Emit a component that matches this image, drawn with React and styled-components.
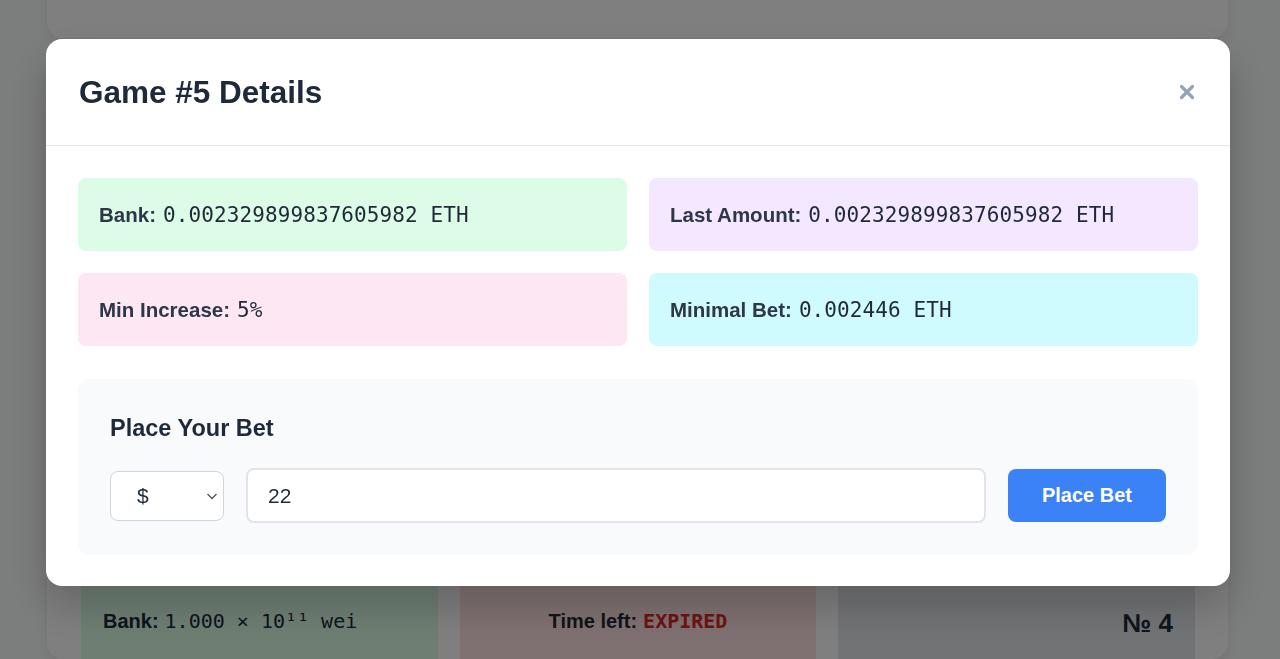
import React from "react";
import styled, { createGlobalStyle } from "styled-components";

const SANS = `"Liberation Sans", Arial, Helvetica, sans-serif`;
const MONO = `"DejaVu Sans Mono", "Liberation Mono", monospace`;

const GlobalStyle = createGlobalStyle`
  html, body {
    margin: 0;
    padding: 0;
    height: 100%;
    overflow: hidden;
  }
  body {
    background: #f9fafb;
    font-family: ${SANS};
    color: #1f2937;
  }
  * {
    box-sizing: border-box;
  }
`;

/* ---------- page behind the modal ---------- */

const Page = styled.div`
  display: flex;
  flex-direction: column;
  gap: 24px;
  width: 1181px;
  margin-left: 47px;
  /* the list is scrolled: only the bottom of the first card shows */
  margin-top: -262px;
`;

const GameCard = styled.div`
  background: white;
  border-radius: 16px;
  box-shadow: 0 4px 12px rgba(0, 0, 0, 0.08);
  padding: ${(p) => (p.$cut ? "33px 33px 0 34px" : "33px 33px 33px 34px")};
  min-height: ${(p) => p.$minHeight || "auto"};
`;

const GameHead = styled.div`
  height: 476px;
`;

const StatGrid = styled.div`
  display: grid;
  grid-template-columns: repeat(3, 1fr);
  gap: 22px;
`;

const Stat = styled.div`
  display: flex;
  align-items: flex-start;
  justify-content: ${(p) => p.$align || "flex-start"};
  height: 88px;
  padding: 38px 22px 0;
  border-radius: 8px 8px 0 0;
  background: ${(p) => p.$bg};
  font-size: 20px;
  line-height: 24px;
  color: #1f2937;

  b {
    font-weight: 700;
    margin-right: 6px;
  }
`;

const StatValue = styled.span`
  font-family: ${MONO};
  font-size: 20px;
  color: ${(p) => p.$color || "inherit"};
  font-weight: ${(p) => (p.$bold ? 700 : 400)};
`;

const GameNo = styled.span`
  font-size: 26px;
  font-weight: 700;
  padding-top: 2px;
`;

/* ---------- modal ---------- */

const Overlay = styled.div`
  position: fixed;
  inset: 0;
  background: rgba(0, 0, 0, 0.5);
  display: flex;
  align-items: flex-start;
  padding: 39px 0 0 46px;
`;

const Modal = styled.div`
  width: 1184px;
  background: white;
  border-radius: 16px;
  box-shadow: 0 20px 40px rgba(0, 0, 0, 0.2);
  overflow: hidden;
`;

const ModalHeader = styled.div`
  display: flex;
  align-items: center;
  justify-content: space-between;
  padding: 34px 33px 34px 33px;
  border-bottom: 1px solid #e5e7eb;
`;

const Title = styled.h2`
  margin: 0;
  font-size: 31.5px;
  line-height: 38px;
  font-weight: 700;
  color: #1e293b;
`;

const CloseButton = styled.button`
  border: none;
  background: none;
  padding: 0;
  width: 20px;
  height: 20px;
  display: flex;
  align-items: center;
  justify-content: center;
  cursor: pointer;
  color: #94a3b8;
`;

const ModalBody = styled.div`
  padding: 32px 32px 31px 32px;
  display: flex;
  flex-direction: column;
  gap: 33px;
`;

const InfoGrid = styled.div`
  display: grid;
  grid-template-columns: 1fr 1fr;
  gap: 22px;
`;

const InfoCard = styled.div`
  display: flex;
  align-items: center;
  height: 73px;
  padding: 0 21px;
  border-radius: 8px;
  background: ${(p) => p.$bg};
  color: #2d3748;
  font-size: 20.5px;
`;

const InfoLabel = styled.span`
  font-weight: 700;
  margin-right: 7px;
`;

const InfoValue = styled.span`
  font-family: ${MONO};
  font-size: 21px;
  letter-spacing: 0.1px;
  color: #1f2937;
`;

const BetPanel = styled.div`
  background: #f8fafc;
  border-radius: 12px;
  padding: 32px 32px 32px 32px;
`;

const BetTitle = styled.h3`
  margin: 0 0 23px;
  font-size: 23.5px;
  line-height: 34px;
  font-weight: 700;
  color: #1e293b;
`;

const BetRow = styled.div`
  display: flex;
  align-items: center;
  gap: 22px;
`;

const SelectWrap = styled.div`
  position: relative;
  flex: 0 0 114px;
  height: 50px;
`;

const CurrencySelect = styled.select`
  appearance: none;
  width: 100%;
  height: 100%;
  border: 1px solid #d1d5db;
  border-radius: 8px;
  background: white;
  padding: 0 0 0 26px;
  font-family: ${SANS};
  font-size: 21px;
  color: #1f2937;
  outline: none;
`;

const Chevron = styled.svg`
  position: absolute;
  right: 4px;
  top: 50%;
  transform: translateY(-50%);
  pointer-events: none;
`;

const AmountInput = styled.input`
  flex: 1;
  height: 55px;
  border: 2px solid #e2e4e8;
  border-radius: 8px;
  background: white;
  padding: 0 20px;
  font-family: ${SANS};
  font-size: 21px;
  color: #1f2937;
  outline: none;
`;

const PlaceButton = styled.button`
  flex: 0 0 158px;
  height: 53px;
  border: none;
  border-radius: 8px;
  background: #3b82f6;
  color: white;
  font-family: ${SANS};
  font-size: 20px;
  font-weight: 700;
  cursor: pointer;
`;

const info = [
  { label: "Bank:", value: "0.002329899837605982 ETH", bg: "#dcfce7" },
  { label: "Last Amount:", value: "0.002329899837605982 ETH", bg: "#f3e8ff" },
  { label: "Min Increase:", value: "5%", bg: "#fce7f3" },
  { label: "Minimal Bet:", value: "0.002446 ETH", bg: "#cffafe" },
];

export default function App() {
  const [currency, setCurrency] = React.useState("$");
  const [amount, setAmount] = React.useState("22");

  return (
    <>
      <GlobalStyle />
      <Page>
        <GameCard $minHeight="300px" />
        <GameCard $cut>
          <GameHead />
          <StatGrid>
            <Stat $bg="#dcfce7">
              <b>Bank:</b>
              <StatValue>1.000 × 10¹¹ wei</StatValue>
            </Stat>
            <Stat $bg="#fee2e2" $align="center">
              <b>Time left:</b>
              <StatValue $color="#dc2626" $bold>
                EXPIRED
              </StatValue>
            </Stat>
            <Stat $bg="#e5e7eb" $align="flex-end">
              <GameNo>№ 4</GameNo>
            </Stat>
          </StatGrid>
        </GameCard>
      </Page>

      <Overlay>
        <Modal>
          <ModalHeader>
            <Title>Game #5 Details</Title>
            <CloseButton aria-label="Close">
              <svg width="16" height="16" viewBox="0 0 16 16">
                <path
                  d="M2.5 2.5 L13.5 13.5 M13.5 2.5 L2.5 13.5"
                  stroke="currentColor"
                  strokeWidth="3.2"
                  strokeLinecap="round"
                />
              </svg>
            </CloseButton>
          </ModalHeader>

          <ModalBody>
            <InfoGrid>
              {info.map((row) => (
                <InfoCard key={row.label} $bg={row.bg}>
                  <InfoLabel>{row.label}</InfoLabel>
                  <InfoValue>{row.value}</InfoValue>
                </InfoCard>
              ))}
            </InfoGrid>

            <BetPanel>
              <BetTitle>Place Your Bet</BetTitle>
              <BetRow>
                <SelectWrap>
                  <CurrencySelect
                    value={currency}
                    onChange={(e) => setCurrency(e.target.value)}
                  >
                    <option value="$">$</option>
                    <option value="ETH">ETH</option>
                  </CurrencySelect>
                  <Chevron width="16" height="16" viewBox="0 0 16 16">
                    <path
                      d="M3.5 6 L8 10.5 L12.5 6"
                      fill="none"
                      stroke="#4b5563"
                      strokeWidth="1.3"
                    />
                  </Chevron>
                </SelectWrap>
                <AmountInput
                  value={amount}
                  onChange={(e) => setAmount(e.target.value)}
                />
                <PlaceButton>Place Bet</PlaceButton>
              </BetRow>
            </BetPanel>
          </ModalBody>
        </Modal>
      </Overlay>
    </>
  );
}
